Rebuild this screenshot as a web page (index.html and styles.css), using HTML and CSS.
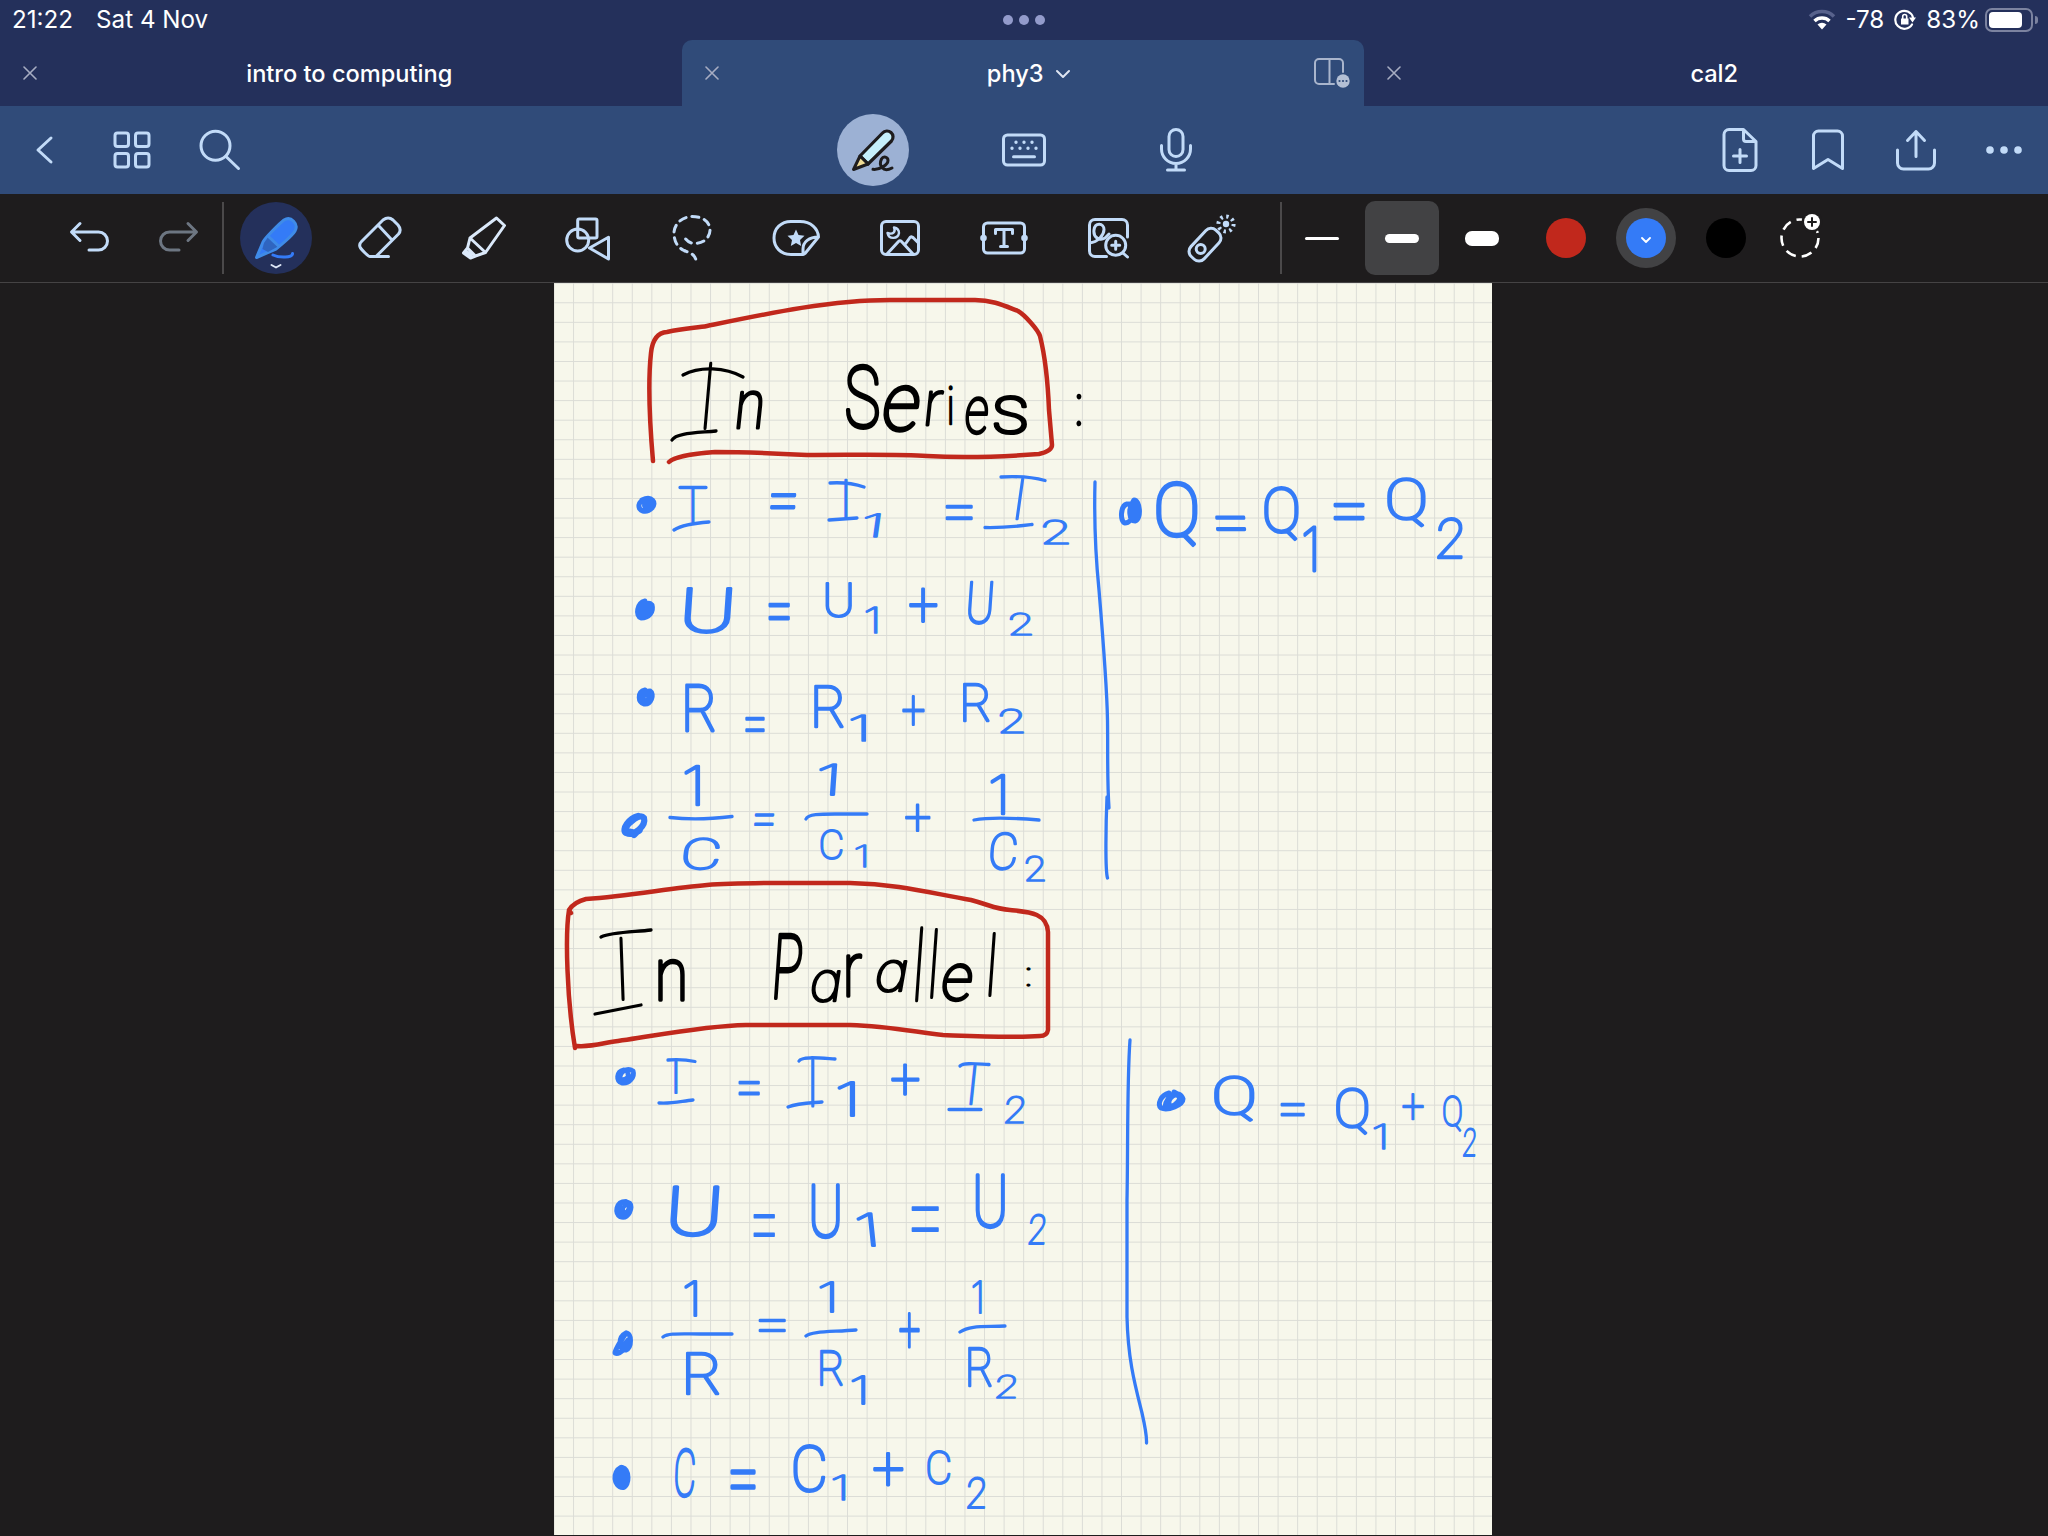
FILE: index.html
```
<!DOCTYPE html>
<html lang="en">
<head>
<meta charset="utf-8">
<title>phy3</title>
<link rel="stylesheet" href="styles.css">
</head>
<body>
<div class="app">
  <header class="status">
    <div class="status-left"><span class="clock">21:22</span><span>Sat 4 Nov</span></div>
    <div class="status-dots"><i></i><i></i><i></i></div>
    <div class="status-right">
      <svg class="wifi" width="28" height="22" viewBox="0 0 28 22"><path class="faint" d="M2 7.5a17 17 0 0 1 24 0"/><path d="M6.5 12a11 11 0 0 1 15 0"/><path class="solid" d="M9.5 15.500a7 7 0 0 1 9 0L14 20.500z"/></svg>
      <span class="signal">-78</span>
      <svg class="lock" width="22" height="22" viewBox="0 0 22 22"><path class="ring" d="M18 15.500A9 9 0 1 1 19 8.500"/><path class="solid" d="M15 8.500h7l-3.500 5zM7 9.500h7.500v6h-7.500z"/><path class="shackle" d="M8.700 10V7.500a2 2 0 0 1 4 0V10"/></svg>
      <span class="percent">83%</span>
      <span class="battery"><b></b></span>
    </div>
  </header>

  <nav class="tabs">
    <div class="tab"><svg class="close" viewBox="-7 -7 14 14"><path d="M-6-6L6 6M6-6L-6 6"/></svg><span class="tab-title">intro to computing</span></div>
    <div class="tab active"><svg class="close" viewBox="-7 -7 14 14"><path d="M-6-6L6 6M6-6L-6 6"/></svg><span class="tab-title">phy3<svg class="chev" viewBox="0 0 16 10"><path d="M2 2l6 6 6-6"/></svg></span>
      <svg class="split" width="38" height="32" viewBox="0 0 38 32"><path d="M29 15V6a4 4 0 0 0-4-4H5a4 4 0 0 0-4 4v17a4 4 0 0 0 4 4h15M15.500 2v25"/><circle cx="29" cy="24" r="6.700"/><path class="dots" d="M25.500 24h.01M29 24h.01M32.500 24h.01"/></svg></div>
    <div class="tab"><svg class="close" viewBox="-7 -7 14 14"><path d="M-6-6L6 6M6-6L-6 6"/></svg><span class="tab-title">cal2</span></div>
  </nav>

  <div class="bar">
    <div class="group">
      <svg class="icon" viewBox="-36 -36 72 72"><path d="M7-12L-6 0L7 12"/></svg>
      <svg class="icon" viewBox="-36 -36 72 72"><rect x="-17" y="-17" width="13.500" height="13.500" rx="2.500"/><rect x="3.500" y="-17" width="13.500" height="13.500" rx="2.500"/><rect x="-17" y="3.500" width="13.500" height="13.500" rx="2.500"/><rect x="3.500" y="3.500" width="13.500" height="13.500" rx="2.500"/></svg>
      <svg class="icon" viewBox="-36 -36 72 72"><circle cx="-4.500" cy="-4.300" r="14.500"/><path d="M6 6.500L18.500 18.500"/></svg>
    </div>
    <div class="group modes">
      <svg class="icon" viewBox="-36 -36 72 72"><circle class="disc" r="36"/><path class="pencil-body" d="M-13 6L9.500-17A6 6 0 0 1 18.500-9L-5 14z"/><path class="pencil-tip" d="M-13 6L-19.500 19.500L-5 14z"/><path class="dark" d="M0 19.300C6 20 15 15 15 10.500C15 7 10.500 5.500 8.500 9C5.500 15 9.500 23 19 18"/></svg>
      <svg class="icon" viewBox="-36 -36 72 72"><rect x="-20.500" y="-15" width="41" height="30" rx="4"/><path d="M-10.500 6.700H10.500"/><path class="keys" d="M-8-7.700h.01M0-7.700h.01M8-7.700h.01M-12-1.700h.01M-4-1.700h.01M4-1.700h.01M12-1.700h.01"/></svg>
      <svg class="icon" viewBox="-36 -36 72 72"><rect x="-7" y="-20.500" width="14" height="27" rx="7"/><path d="M-14.500-4.500V-1a14.500 14.500 0 0 0 29 0V-4.500M0 13.500V20M-8.500 20H8.500"/></svg>
    </div>
    <div class="group end">
      <svg class="icon" viewBox="-36 -36 72 72"><path d="M3.500-20.500H-11a5 5 0 0 0-5 5v31a5 5 0 0 0 5 5h22a5 5 0 0 0 5-5V-8.500zM3.500-20.500V-11a2.500 2.500 0 0 0 2.500 2.500H16M0-.5V12.500M-6.500 6H6.500"/></svg>
      <svg class="icon" viewBox="-36 -36 72 72"><path d="M-14.500 18.500V-14a5 5 0 0 1 5-5H9.500a5 5 0 0 1 5 5V18.500L0 9.500z"/></svg>
      <svg class="icon" viewBox="-36 -36 72 72"><path d="M-18.500 0V13a6 6 0 0 0 6 6h25a6 6 0 0 0 6-6V0M0 6.500V-18.500M-8.500-9.500L0-18.500L8.500-9.500"/></svg>
      <svg class="icon" viewBox="-36 -36 72 72"><g class="more"><circle cx="-14" r="3.800"/><circle r="3.800"/><circle cx="14" r="3.800"/></g></svg>
    </div>
  </div>

  <div class="tools">
    <svg class="tool history" viewBox="-36 -36 72 72"><path d="M-10-14.500L-18.500-6L-10 2.500M-18-6H8.500a9 9 0 0 1 0 18H-1"/></svg>
    <svg class="tool history off" viewBox="-36 -36 72 72"><path d="M10-14.500L18.500-6L10 2.500M18-6H-8.500a9 9 0 0 0 0 18H1"/></svg>
    <span class="rule"></span>
    <svg class="tool" viewBox="-36 -36 72 72"><circle class="pen-disc" r="36"/><path class="pen" d="M-19.500 19.500L-13 4C-11 0 4-15 8-18C15-22.500 23-14 19-7C16-2 4 8 0 11z"/><path class="pen-shade" d="M-7.500-1.500L2 8.500L-8 14L-13.500 11L-12 5z"/><path class="pen-line" d="M-7.500-1.500L2.500 8"/><path class="pen-ink" d="M-3 17C3 20 17 20 16.500 15.500"/><path class="pen-chev" d="M-4.500 27L0 29.500L4.500 27"/></svg>
    <svg class="tool" viewBox="-36 -36 72 72"><path d="M-10 18.500H8.500M-10 18.500C-12 18.500-18 12-19.500 10C-21 7.500-20 5-18.500 3.500L3-18C7-21 10-20.500 13-18L18-13C20.500-10 21-7 18.500-4L-3.500 18M-1.500-12.500L11.500 1.500"/></svg>
    <svg class="tool pale" viewBox="-36 -36 72 72"><path d="M12.500-20L20.500-12.500L1.500 14.500L-14 0zM-14 0L-16.500 10L-8.500 18L1.500 14.500M-16.500 10L-20.500 15L-13.500 20L-8.500 18M-14 0L1.500 14.500M-17 14L-13 17.500"/></svg>
    <svg class="tool" viewBox="-36 -36 72 72"><rect x="-10.300" y="-19" width="19.300" height="19" rx="1.500"/><circle cx="-10.300" cy="2" r="11"/><path d="M1.500 10L20.500-.7V21z"/></svg>
    <svg class="tool" viewBox="-36 -36 72 72"><path class="dash" d="M-6.300 1C-3 5 0 5.500 4 5.300C14 5 18.500-3 18-9C17-18 9-21.500 0-21.500C-11-21-18-13-18-5C-18 3-15 9-8 12.500C-2 15 2 16 3.700 21"/></svg>
    <svg class="tool" viewBox="-36 -36 72 72"><path d="M7 16.500H-5C-15 16.500-22 9.500-22 0C-22-9.500-15-16.500-5-16.500H4C15-16.500 22-9.500 22.500-1L9 15.500Q8 16.500 7 16.500V11C7 4 13-1 22.500-1"/><path class="fill" d="M0-8.500L2.500-3L8.500-2.200L4 2L5.200 8L0 5L-5.200 8L-4 2L-8.500-2.200L-2.500-3z"/></svg>
    <svg class="tool" viewBox="-36 -36 72 72"><rect x="-18.500" y="-16.500" width="37" height="33" rx="4.500"/><path d="M-13 16L-1.500 3.500Q0 2 1.500 3.500L13 16M5 6.500L10-.5Q12-2 13.500 0L18.500 5"/><path class="thin" d="M-6-10.500C-4-6-7-3-12.500-5C-11 2-2 1-1-5C-1-8-3-10-6-10.500z"/></svg>
    <svg class="tool" viewBox="-36 -36 72 72"><rect x="-20.500" y="-15" width="41" height="30" rx="4"/><circle class="fill" cx="-20.500" r="3.300"/><circle class="fill" cx="20.500" r="3.300"/><path d="M-8.500-4.500V-8.500H8.500V-4.500M0-8.500V8.500M-3.500 8.500H3.500"/></svg>
    <svg class="tool" viewBox="-36 -36 72 72"><path d="M-1.500 18.500H-13a5.500 5.500 0 0 1-5.500-5.500V-13a5.500 5.500 0 0 1 5.500-5.500H14a5.500 5.500 0 0 1 5.500 5.500V-1M-18.500 5C-10 4-4-3-4-8.500C-4-15-13-16-14-8C-15 0-8 3-3 0L1-4"/><circle cx="7.700" cy="7.300" r="10"/><path d="M15 15L19.500 19M3.700 7.300H11.700M7.700 3.300V11.300"/></svg>
    <svg class="tool" viewBox="-36 -36 72 72"><rect x="-18" y="-9" width="36" height="18" rx="7" transform="translate(-7 6.700) rotate(-47)"/><circle cx="-11.300" cy="11" r="4.500"/><circle class="fill" cx="14" cy="-14" r="3.200"/><circle class="rays" cx="14" cy="-14" r="7.600"/></svg>
    <span class="rule wide"></span>
    <span class="slot"><b class="stroke s1"></b></span>
    <span class="slot"><span class="picked"><b class="stroke s2"></b></span></span>
    <span class="slot"><b class="stroke s3"></b></span>
    <span class="slot first"><b class="swatch red"></b></span>
    <span class="slot"><b class="swatch blue"><svg viewBox="-5 -4 10 8"><path d="M-4-2L0 2L4-2"/></svg></b></span>
    <span class="slot"><b class="swatch black"></b></span>
    <svg class="tool add" viewBox="-36 -36 72 72"><circle class="hoop" cy="0" r="18.500"/><circle class="badge-gap" cx="12" cy="-16" r="10.500"/><circle class="badge" cx="12" cy="-16" r="8"/><path class="badge-plus" d="M8-16H16M12-20V-12"/></svg>
  </div>

  <main class="desk">
    <svg class="page" viewBox="554 283 938 1252">
      <defs><pattern id="grid" x="553.5" y="282.700" width="19.570" height="19.570" patternUnits="userSpaceOnUse"><path class="grid-line" d="M0 .5H19.570M.5 0V19.570"/></pattern></defs>
      <rect x="554" y="283" width="938" height="1252" fill="url(#grid)"/>

      <g class="frame">
        <path d="M653 461C649 415 648 380 651 353Q653 333 667 332C685 328 697 328 707 326C765 314 830 300 890 300H975C993 300 1005 306 1018 311C1025 315 1038 330 1040 336C1046 360 1048 385 1049 410L1052 445Q1052 451 1039 454C1000 457 960 458 927 456C900 454 860 455 807 455C770 453 740 452 715 452C700 453 675 456 669 462"/>
        <path d="M571 913L569 910Q574 902 586 899C630 896 670 888 707 885C745 882 810 883 850 883C900 884 930 893 971 900C990 905 995 909 1010 910C1030 912 1047 913 1048 932V1030Q1047 1036 1040 1036C1010 1038 970 1036 943 1035C920 1033 890 1026 850 1025H746C700 1026 650 1037 611 1042C600 1044 590 1047 577 1046M569 910C565 935 567 1000 575 1048"/>
      </g>

      <g class="ink black-ink">
        <g><text data-box="706 361 4 69 -5">I</text><text data-box="738 390 24 40 -6">n</text> <text data-box="846 362 34 68">S</text><text data-box="883 384 36 49 -8">e</text><text data-box="927 389 16 37 -6">r</text><text data-box="948 384 5 41">i</text><text data-box="965 396 23 40 -4">e</text><text data-box="993 394 34 42">s</text> <text data-box="1076 393 6 34">:</text></g>
        <g><text data-box="620 936 4 65 2">I</text><text data-box="658 958 27 44">n</text> <text data-box="776 932 26 68 -4">P</text><text class="script-a" data-box="811 969 25 34 -8">a</text><text data-box="846 953 17 45">r</text><text class="script-a" data-box="876 959 26 34 -10">a</text><text data-box="917 926 4 76 -4">l</text><text data-box="932 928 4 71 -4">l</text><text data-box="942 963 30 40 -8">e</text><text data-box="990 932 4 65 -4">l</text><text data-box="1026 967 5 20">:</text></g>
      </g>

      <g class="ink blue-ink">
        <g><text data-box="691 486 4 37">I</text> <text data-box="770 492 26 18 -4" >=</text> <text data-box="844 479 4 39">I</text><text class="one" data-box="863 513 17 25 -8">1</text> <text data-box="945 504 28 17">=</text> <text data-box="1018 477 4 43 -8">I</text><text data-box="1042 519 27 26">2</text></g>
        <g><text data-box="1156 480 42 68">Q</text> <text data-box="1215 515 31 17 4">=</text> <text data-box="1264 486 35 56">Q</text><text class="one" data-box="1303 525 14 47">1</text> <text data-box="1333 502 32 19">=</text> <text data-box="1387 476 39 52">Q</text><text data-box="1437 516 27 43 -4">2</text></g>
        <g><text data-box="684 586 47 48 -4">U</text> <text data-box="768 602 22 19">=</text> <text data-box="825 582 27 37">U</text><text class="one" data-box="865 606 13 28">1</text> <text data-box="909 588 29 36">+</text> <text data-box="968 580 24 45 -4">U</text><text data-box="1009 611 23 25">2</text></g>
        <g><text data-box="685 683 30 49">R</text> <text data-box="745 716 20 17">=</text> <text data-box="814 684 30 44">R</text><text class="one" data-box="850 714 17 28">1</text> <text data-box="902 695 23 32">+</text> <text data-box="963 682 27 40">R</text><text data-box="999 708 25 26">2</text></g>
        <g><text class="one" data-box="684 764 17 42">1</text><text data-box="683 837 37 34 -6">C</text> <text data-box="754 813 20 14 -4">=</text> <text class="one" data-box="818 763 19 33 -4">1</text><text data-box="820 828 23 33">C</text><text class="one" data-box="855 845 12 23">1</text> <text data-box="905 803 26 29">+</text> <text class="one" data-box="990 773 16 42">1</text><text data-box="990 831 27 40 -4">C</text><text data-box="1025 855 20 27">2</text></g>
        <g><text data-box="674 1058 4 36">I</text> <text data-box="738 1080 22 16">=</text> <text data-box="811 1058 4 50">I</text><text class="one" data-box="837 1081 19 36">1</text> <text data-box="891 1064 29 33">+</text> <text data-box="971 1064 4 41 -6">I</text><text data-box="1005 1095 20 29 -6">2</text></g>
        <g><text data-box="1214 1075 41 48">Q</text> <text data-box="1280 1102 25 15">=</text> <text data-box="1336 1086 33 50">Q</text><text class="one" data-box="1373 1124 13 26">1</text> <text data-box="1402 1093 22 28">+</text> <text data-box="1443 1094 19 39">Q</text><text data-box="1463 1127 13 30 -4">2</text></g>
        <g><text data-box="670 1185 48 53 -4">U</text> <text class="fine" data-box="753 1213 22 25">=</text> <text data-box="811 1183 29 57">U</text><text class="one" data-box="857 1212 18 35 6">1</text> <text class="fine" data-box="911 1205 28 28">=</text> <text data-box="975 1174 30 56">U</text><text data-box="1029 1213 17 32 -6">2</text></g>
        <g><text class="one" data-box="684 1280 14 37">1</text><text data-box="686 1351 34 44">R</text> <text data-box="758 1320 28 14">=</text> <text class="one" data-box="819 1281 16 32">1</text><text data-box="820 1349 23 37">R</text><text class="one" data-box="851 1375 15 30">1</text> <text data-box="899 1311 21 38">+</text> <text class="one" data-box="972 1280 10 34">1</text><text data-box="968 1346 24 41">R</text><text data-box="996 1374 21 25 -6">2</text></g>
        <g><text data-box="675 1447 20 52 -2">C</text> <text data-box="730 1469 26 22">=</text> <text data-box="793 1443 33 50">C</text><text class="one" data-box="832 1475 14 26">1</text> <text data-box="873 1452 31 35">+</text> <text data-box="927 1449 24 37">C</text><text data-box="967 1476 19 33 -4">2</text></g>
      </g>

      <g class="rules black-rules">
        <path d="M683 375C700 366 725 367 743 377M672 440C676 433 695 433 716 431"/>
        <path d="M601 937C612 932 635 932 651 930M595 1014L641 1005"/>
      </g>
      <g class="rules">
        <path d="M680 487.500H706M674 530C682 525 695 523 709 522"/>
        <path d="M830 483C845 482 855 484 864 487M829 520L857 518"/>
        <path d="M1001 477C1018 476 1032 477 1045 480.500M985 527.500C1005 528 1020 526 1032 524.500"/>
        <path d="M668 1060C680 1059 688 1060 695 1061.500M659 1103C672 1104 682 1101 693 1100"/>
        <path d="M799 1061C802 1056 820 1058 835 1059M788 1107C798 1103 810 1103 822 1102"/>
        <path d="M960 1066C964 1062 978 1064 989 1064.500M949 1109.500H981"/>
        <path d="M670 817.500C690 820 712 819 732 816.500M806 819C808 814 820 814 835 814H867M974 820C990 817 1015 818 1039 820"/>
        <path d="M663 1337C668 1333 680 1334 700 1334H732M806 1336C812 1331 830 1332 856 1330M960 1332C970 1325 985 1327 1005 1326"/>
        <path d="M1095 482C1094 520 1096 560 1099 590C1104 650 1107 690 1107.500 720C1108 750 1107 780 1109 808M1107 797C1106 820 1105 870 1107.500 878"/>
        <path d="M1130 1040C1127 1080 1128 1150 1127 1200V1317C1128 1360 1135 1385 1142 1413Q1147 1435 1146.500 1443"/>
      </g>

      <g class="bullets">
        <path d="M642 500C652 495 657 503 652 508C646 514 638 511 639 505C640 499 650 499 650 504C648 509 643 508 645 503"/>
        <path d="M1127 504C1120 506 1120 522 1125 523C1133 523 1137 506 1129 504M1133 502C1128 508 1129 521 1135 521C1142 519 1140 500 1134 500C1131 503 1131 518 1136 517C1138 512 1137 505 1135 505"/>
        <path d="M645 601C637 603 635 616 641 618C649 618 654 612 652 605C648 601 641 606 642 613C644 614 650 611 649 606L645 612"/>
        <path d="M645 690C637 692 638 703 644 704C651 705 655 694 650 691C644 691 641 698 645 701C650 700 650 695 646 695"/>
        <path class="heavy" d="M638 816C629 818 621 830 626 833C635 837 646 825 644 818C640 813 629 822 625 829C630 834 640 833 640 829L634 835"/>
        <path d="M624 1070C616 1072 616 1081 622 1083C629 1084 635 1077 633 1071C627 1067 619 1072 620 1079C624 1081 630 1078 628 1074"/>
        <path d="M1169 1093C1161 1095 1157 1104 1161 1108C1168 1111 1183 1105 1183 1099C1180 1089 1167 1094 1165 1107C1172 1107 1178 1104 1180 1098C1176 1091 1168 1098 1169 1104M1174 1092L1181 1096"/>
        <path class="light" d="M626 1201C615 1201 614 1214 620 1217C629 1220 634 1207 630 1203C624 1199 616 1205 620 1213C625 1215 631 1210 628 1205C624 1205 621 1209 624 1212"/>
        <path d="M626 1333C618 1337 618 1350 626 1350C632 1347 632 1333 626 1333C622 1339 615 1350 615 1353C619 1355 629 1347 628 1340L623 1346"/>
        <path class="heavy" d="M621 1468C613 1472 614 1486 623 1487C629 1485 629 1470 622 1468C617 1471 618 1483 624 1482C628 1479 625 1472 621 1473L622 1480"/>
      </g>
    </svg>
  </main>
</div>
<script src="ink.js"></script>
</body>
</html>
```
FILE: styles.css
```
* { box-sizing: border-box; }
body {
  margin: 0;
  background: #1e1c1d;
  font-family: Inter, "Noto Sans", sans-serif;
  color: #fff;
}
.app {
  width: 2048px;
  height: 1536px;
  display: flex;
  flex-direction: column;
  overflow: hidden;
}
svg { display: block; fill: none; stroke-linecap: round; stroke-linejoin: round; }

/* status line */
.status {
  height: 40px;
  background: #24305b;
  display: grid;
  grid-template-columns: 1fr auto 1fr;
  align-items: center;
  font-size: 24.2px;
  line-height: 40px;
}
.status-left { display: flex; gap: 23px; padding-left: 12px; }
.status-dots { display: flex; gap: 6px; }
.status-dots i { width: 10px; height: 10px; border-radius: 50%; background: #939bcb; }
.status-right { display: flex; align-items: center; justify-content: flex-end; padding-right: 10px; }
.wifi { stroke: #fff; stroke-width: 3.5; stroke-linecap: butt; margin-right: 9px; }
.wifi .faint { stroke: #58628c; }
.wifi .solid, .lock .solid { fill: #fff; stroke: none; }
.signal { margin-right: 10px; }
.lock { stroke: #fff; stroke-width: 2.2; margin-right: 10px; }
.lock .shackle { stroke-width: 1.6; }
.percent { margin-right: 5px; }
.battery {
  position: relative;
  width: 48px;
  height: 24px;
  margin-right: 5px;
  border: 2px solid #7c83a0;
  border-radius: 7px;
  padding: 2px;
}
.battery b { display: block; width: 33px; height: 16px; border-radius: 4px; background: #fff; }
.battery::after {
  content: "";
  position: absolute;
  left: 48px;
  top: 6px;
  width: 3px;
  height: 8px;
  border-radius: 0 3px 3px 0;
  background: #7c83a0;
}

/* document tabs */
.tabs { height: 66px; display: grid; grid-template-columns: 682px 682px 684px; background: #24305b; }
.tab {
  display: flex;
  align-items: center;
  padding: 0 0 0 22.5px;
  font-size: 23.6px;
  font-weight: 500;
}
.tab.active { background: #304b79; border-radius: 10px 10px 0 0; }
.close { width: 14px; height: 14px; stroke: #a7adc2; stroke-width: 1.6; }
.tab-title { flex: 1; display: flex; align-items: center; justify-content: center; gap: 11px; padding: 1px 20px 0 0; }
.active .tab-title { padding: 1px 0 0 25px; }
.chev { width: 16px; height: 10px; stroke: #dfe5f2; stroke-width: 2; }
.split { stroke: #a9b5cc; stroke-width: 2; margin-right: 12px; }
.split circle { fill: #b4c0d5; stroke: none; }
.split .dots { stroke: #304b79; stroke-width: 2.2; }

/* navigation bar */
.bar { height: 88px; background: #304b79; display: grid; grid-template-columns: 1fr auto 1fr; align-items: center; }
.group { display: flex; gap: 16px; padding: 0 8px; }
.modes { gap: 79.5px; padding: 0; }
.end { justify-content: flex-end; }
.icon { width: 72px; height: 72px; stroke: #c2dbf8; stroke-width: 3; }
.disc { fill: #9cb1d4; stroke: none; }
.pencil-body { fill: #c6f0fb; stroke: #1e1c1d; stroke-width: 3.2; }
.pencil-tip { fill: #f0dc95; stroke: #1e1c1d; stroke-width: 3; }
.dark { stroke: #1e1c1d; stroke-width: 3; }
.keys { stroke-width: 3.4; }
.more { fill: #c2dbf8; stroke: none; }

/* drawing tools */
.tools {
  height: 89px;
  padding-left: 46px;
  border-bottom: 1px solid #454344;
  background: #1e1c1d;
  display: flex;
  align-items: center;
}
.tool { width: 72px; height: 72px; margin: 0 16px; flex: none; stroke: #c2dbf8; stroke-width: 3; }
.history { margin: 0 8px; }
.off { stroke: #6d7682; }
.pale { stroke: #dbe9fa; }
.rule { width: 2px; height: 72px; background: #4b494a; flex: none; }
.rule.wide { margin-left: 16px; }
.pen-disc { fill: #24305b; stroke: none; }
.pen { fill: #347bf7; stroke: #3f8be8; stroke-width: 3; }
.pen-shade { fill: #2f65c0; stroke: none; }
.pen-line { stroke: #3f8be8; }
.pen-ink { stroke: #347bf7; stroke-width: 3; }
.pen-chev { stroke: #dfe8f8; stroke-width: 2; }
.dash { stroke-dasharray: 7 5.8; }
.fill { fill: #c2dbf8; stroke: none; }
.thin { stroke-width: 2.4; }
.rays { stroke-dasharray: 2.4 3.569; stroke-width: 4; stroke-linecap: butt; }
.slot { width: 80px; height: 74px; display: flex; align-items: center; justify-content: center; flex: none; }
.slot.first { margin-left: 4px; }
.picked { width: 74px; height: 74px; border-radius: 10px; background: #424244; display: flex; align-items: center; justify-content: center; }
.stroke { width: 34px; background: #fff; }
.s1 { height: 3px; border-radius: 2px; }
.s2 { height: 9px; border-radius: 5px; }
.s3 { height: 15px; border-radius: 7px; }
.swatch { width: 40px; height: 40px; border-radius: 50%; display: flex; align-items: center; justify-content: center; }
.swatch svg { width: 10px; height: 8px; stroke: #fff; stroke-width: 1.8; margin-top: 3px; }
.red { background: #c1281c; }
.blue { background: #347bf7; box-shadow: 0 0 0 10px #424244; }
.black { background: #000; }
.add { margin: 0 -2px; }
.hoop { stroke: #fff; stroke-dasharray: 10.500 6.107; stroke-width: 2.6; stroke-linecap: butt; }
.badge-gap { fill: #1e1c1d; stroke: none; }
.badge { fill: #fff; stroke: none; }
.badge-plus { stroke: #1e1c1d; stroke-width: 2; }

/* notebook page */
.desk { flex: 1; display: flex; justify-content: flex-start; padding-left: 554px; }
.page { width: 938px; height: 1252px; background: #f7f7eb; }
.grid-line { stroke: #dbdcd6; stroke-width: 1; }
.frame { stroke: #c1281c; stroke-width: 4.5; }
.ink { font-family: Roboto, "Liberation Sans", sans-serif; font-weight: 100; font-size: 60px; stroke-width: 2.8px; }
.ink .one { font-family: Inter, sans-serif; }
.ink .fine { stroke-width: 1.2px; }
.ink .script-a { font-family: Inter, sans-serif; font-feature-settings: "cv11"; }
.black-ink { fill: #000; stroke: #000; }
.blue-ink { fill: #347bf7; stroke: #347bf7; }
.rules { stroke: #347bf7; stroke-width: 3.3; }
.black-rules { stroke: #000; }
.bullets { stroke: #347bf7; stroke-width: 5; }
.heavy { stroke-width: 6.2; }
.light { stroke-width: 4.2; }
```
FILE: ink.js
```
// Stretches each written character to its box on the page: data-box = "x y width height [slant]".
const pen = document.createElement("canvas").getContext("2d");
for (const t of document.querySelectorAll(".ink text")) {
  const [x, y, w, h, slant = 0] = t.dataset.box.split(" ").map(Number);
  const cs = getComputedStyle(t);
  pen.font = `${cs.fontWeight} 600px ${cs.fontFamily}`;
  const m = pen.measureText(t.textContent);
  const left = -m.actualBoundingBoxLeft / 10;
  const top = -m.actualBoundingBoxAscent / 10;
  const width = m.actualBoundingBoxRight / 10 - left;
  const height = m.actualBoundingBoxDescent / 10 - top;
  const outline = parseFloat(cs.strokeWidth);
  const sx = w / (width + outline);
  const sy = h / (height + outline);
  const cx = x + w / 2;
  const cy = y + h / 2;
  t.setAttribute("transform",
    `translate(${cx} ${cy}) skewX(${slant}) scale(${sx} ${sy}) translate(${-left - width / 2} ${-top - height / 2})`);
}
```
